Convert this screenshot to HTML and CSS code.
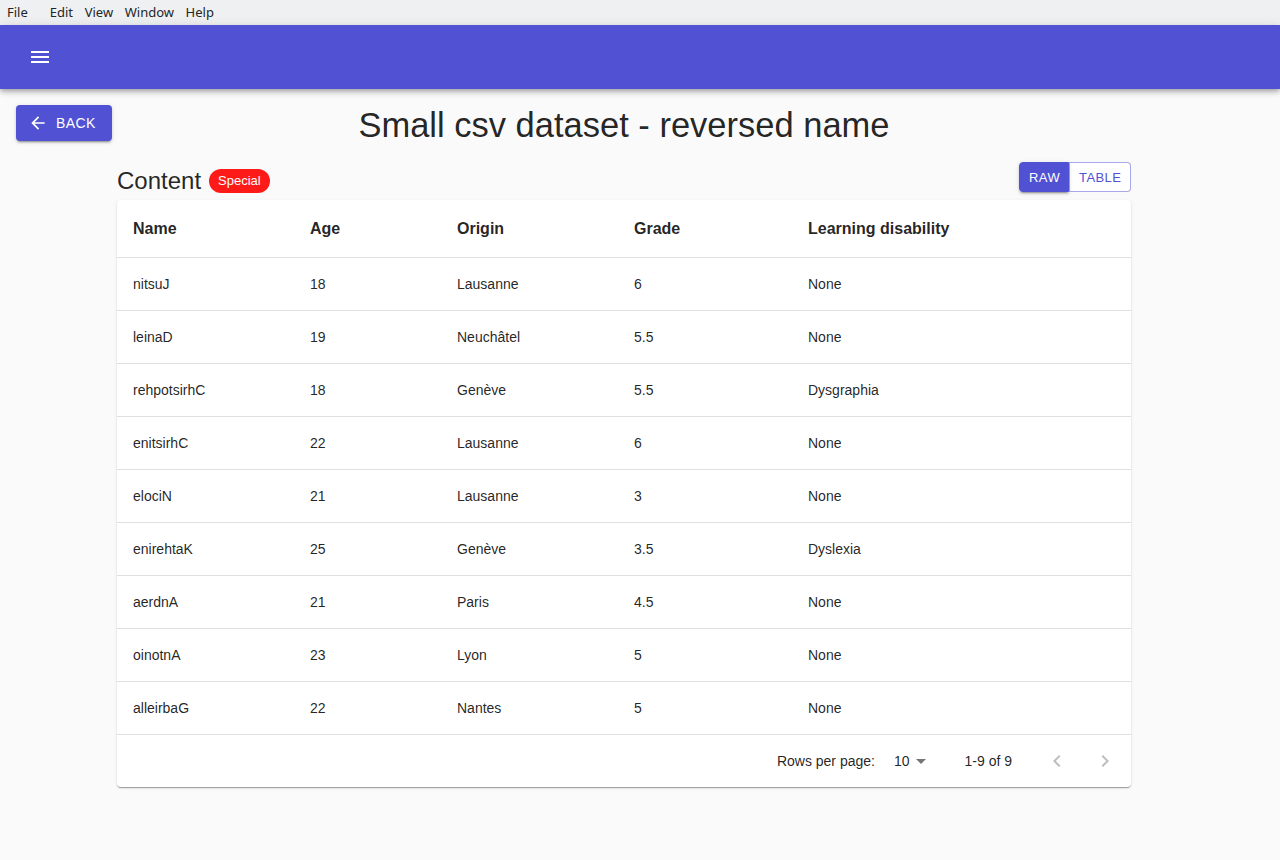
FILE: index.html
```html
<!DOCTYPE html>
<html lang="en">
<head>
<meta charset="utf-8">
<title>Small csv dataset - reversed name</title>
<link rel="stylesheet" href="styles.css">
</head>
<body>
<div class="menubar">
  <span class="menu-item menu-file">File</span>
  <span class="menu-item">Edit</span>
  <span class="menu-item">View</span>
  <span class="menu-item">Window</span>
  <span class="menu-item">Help</span>
</div>
<header class="appbar">
  <button class="icon-btn" aria-label="menu">
    <svg viewBox="0 0 24 24" width="24" height="24"><path fill="#fff" d="M3 18h18v-2H3v2zm0-5h18v-2H3v2zm0-7v2h18V6H3z"/></svg>
  </button>
</header>
<main class="page">
  <div class="side">
    <button class="back-btn">
      <svg class="back-icon" viewBox="0 0 24 24" width="20" height="20"><path fill="#fff" d="M20 11H7.83l5.59-5.59L12 4l-8 8 8 8 1.41-1.41L7.83 13H20v-2z"/></svg>
      <span>Back</span>
    </button>
  </div>
  <div class="content">
    <h1 class="title">Small csv dataset - reversed name</h1>
    <div class="section-head">
      <div class="section-title">
        <h2>Content</h2>
        <span class="badge">Special</span>
      </div>
      <div class="toggle">
        <button class="toggle-btn active">Raw</button>
        <button class="toggle-btn">Table</button>
      </div>
    </div>
    <div class="card">
      <table class="data">
        <colgroup>
          <col class="c1"><col class="c2"><col class="c3"><col class="c4"><col>
        </colgroup>
        <thead>
          <tr><th>Name</th><th>Age</th><th>Origin</th><th>Grade</th><th>Learning disability</th></tr>
        </thead>
        <tbody>
          <tr><td>nitsuJ</td><td>18</td><td>Lausanne</td><td>6</td><td>None</td></tr>
          <tr><td>leinaD</td><td>19</td><td>Neuchâtel</td><td>5.5</td><td>None</td></tr>
          <tr><td>rehpotsirhC</td><td>18</td><td>Genève</td><td>5.5</td><td>Dysgraphia</td></tr>
          <tr><td>enitsirhC</td><td>22</td><td>Lausanne</td><td>6</td><td>None</td></tr>
          <tr><td>elociN</td><td>21</td><td>Lausanne</td><td>3</td><td>None</td></tr>
          <tr><td>enirehtaK</td><td>25</td><td>Genève</td><td>3.5</td><td>Dyslexia</td></tr>
          <tr><td>aerdnA</td><td>21</td><td>Paris</td><td>4.5</td><td>None</td></tr>
          <tr><td>oinotnA</td><td>23</td><td>Lyon</td><td>5</td><td>None</td></tr>
          <tr><td>alleirbaG</td><td>22</td><td>Nantes</td><td>5</td><td>None</td></tr>
        </tbody>
      </table>
      <div class="pager">
        <span class="pager-label">Rows per page:</span>
        <span class="pager-select">10
          <svg viewBox="0 0 24 24" width="24" height="24"><path fill="rgba(0,0,0,0.54)" d="M7 10l5 5 5-5z"/></svg>
        </span>
        <span class="pager-range">1-9 of 9</span>
        <span class="pager-nav">
          <svg viewBox="0 0 24 24" width="24" height="24"><path fill="rgba(0,0,0,0.26)" d="M15.41 7.41L14 6l-6 6 6 6 1.41-1.41L10.83 12z"/></svg>
        </span>
        <span class="pager-nav pager-next">
          <svg viewBox="0 0 24 24" width="24" height="24"><path fill="rgba(0,0,0,0.26)" d="M10 6L8.59 7.41 13.17 12l-4.58 4.59L10 18l6-6z"/></svg>
        </span>
      </div>
    </div>
  </div>
</main>
</body>
</html>
```
FILE: styles.css
```css
* { box-sizing: border-box; }
html, body { margin: 0; padding: 0; }
body {
  background: #fafafa;
  font-family: "Liberation Sans", Arial, sans-serif;
  color: rgba(0, 0, 0, 0.87);
  width: 1280px;
  height: 860px;
  overflow: hidden;
}
.menubar {
  height: 25px;
  background: #eff0f1;
  display: flex;
  align-items: center;
  padding-left: 7px;
  font-family: "Noto Sans", sans-serif;
  font-size: 13px;
  color: #232629;
}
.menu-item { margin-right: 11.6px; line-height: 25px; }
.menu-file { margin-right: 22px; }
.appbar {
  height: 64px;
  background: #5051d3;
  display: flex;
  align-items: center;
  padding-left: 28px;
  box-shadow: 0 2px 4px -1px rgba(0,0,0,0.2), 0 4px 5px 0 rgba(0,0,0,0.14), 0 1px 10px 0 rgba(0,0,0,0.12);
  position: relative;
}
.icon-btn {
  border: 0;
  background: none;
  padding: 0;
  width: 24px;
  height: 24px;
  display: block;
}
.icon-btn svg { display: block; }
.page {
  display: grid;
  grid-template-columns: 117px 1014px;
}
.side { padding: 16px 0 0 16px; }
.back-btn {
  display: flex;
  align-items: center;
  height: 36px;
  width: 96px;
  padding: 0 16px 0 12px;
  border: 0;
  border-radius: 4px;
  background: #5051d3;
  color: #fff;
  font-family: "Liberation Sans", Arial, sans-serif;
  font-size: 14px;
  letter-spacing: 0.4px;
  text-transform: uppercase;
  box-shadow: 0 3px 1px -2px rgba(0,0,0,0.2), 0 2px 2px 0 rgba(0,0,0,0.14), 0 1px 5px 0 rgba(0,0,0,0.12);
}
.back-icon { margin-right: 8px; display: block; }
.content { padding-top: 16px; }
.title {
  margin: 0;
  font-size: 34.5px;
  font-weight: 400;
  line-height: 40px;
  height: 37px;
  text-align: center;
  color: rgba(0,0,0,0.87);
}
.section-head {
  margin-top: 20px;
  height: 30px;
  display: flex;
  justify-content: space-between;
  align-items: flex-end;
}
.section-title { display: flex; align-items: flex-end; }
.section-title h2 {
  margin: 0 0 -3px 0;
  font-size: 24px;
  font-weight: 400;
  line-height: 28px;
}
.badge {
  margin-left: 8px;
  margin-bottom: -1px;
  height: 24px;
  line-height: 24px;
  padding: 0 9px;
  border-radius: 12px;
  background: #ff1a1a;
  color: #fff;
  font-size: 13px;
}
.toggle { display: flex; height: 30px; }
.toggle-btn {
  font-family: "Liberation Sans", Arial, sans-serif;
  font-size: 13px;
  letter-spacing: 0.4px;
  text-transform: uppercase;
  height: 30px;
  padding: 0 9px;
  border: 1px solid rgba(80, 81, 211, 0.5);
  background: #fff;
  color: #5051d3;
  border-radius: 0 4px 4px 0;
  width: 62px;
}
.toggle-btn.active {
  background: #5051d3;
  color: #fff;
  border-color: #5051d3;
  border-radius: 4px 0 0 4px;
  width: 50px;
  box-shadow: 0 3px 1px -2px rgba(0,0,0,0.2), 0 2px 2px 0 rgba(0,0,0,0.14), 0 1px 5px 0 rgba(0,0,0,0.12);
  position: relative;
}
.card {
  margin-top: 8px;
  background: #fff;
  border-radius: 4px;
  box-shadow: 0 2px 1px -1px rgba(0,0,0,0.2), 0 1px 1px 0 rgba(0,0,0,0.14), 0 1px 3px 0 rgba(0,0,0,0.12);
  overflow: hidden;
}
.data {
  width: 100%;
  border-collapse: collapse;
  table-layout: fixed;
}
.c1 { width: 177px; }
.c2 { width: 147px; }
.c3 { width: 177px; }
.c4 { width: 174px; }
.data th {
  height: 57px;
  padding: 2px 16px 0;
  text-align: left;
  font-size: 16px;
  font-weight: 700;
  border-bottom: 1px solid #e0e0e0;
}
.data td {
  height: 53px;
  padding: 0 16px;
  font-size: 14px;
  border-bottom: 1px solid #e0e0e0;
}
.pager {
  height: 52px;
  display: flex;
  align-items: center;
  justify-content: flex-end;
  padding-right: 14px;
  font-size: 14px;
}
.pager-label { margin-right: 19px; }
.pager-select { display: flex; align-items: center; margin-right: 32px; }
.pager-select svg { display: block; margin-left: -1px; }
.pager-range { margin-right: 33px; }
.pager-nav { width: 24px; height: 24px; display: block; }
.pager-nav svg { display: block; }
.pager-next { margin-left: 24px; }
```
